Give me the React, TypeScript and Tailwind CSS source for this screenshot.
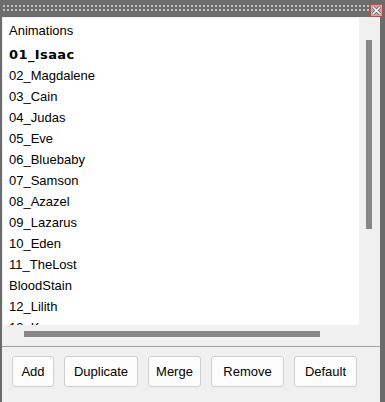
import React from 'react';

const Grip = () => (
  <svg width="368" height="13" className="block">
    <defs>
      <pattern id="dots" x="0" y="0" width="4" height="4" patternUnits="userSpaceOnUse">
        <rect x="1" y="1" width="2" height="2" fill="#c4c4c4" />
      </pattern>
    </defs>
    <rect x="0" y="1" width="368" height="8" fill="url(#dots)" />
  </svg>
);

const CloseBox = () => (
  <svg width="13" height="13" viewBox="0 0 13 13" className="block">
    <rect x="0.5" y="0.5" width="12" height="12" fill="#d9a3a3" stroke="#a85454" />
    <path d="M3 3 L10 10 M10 3 L3 10" stroke="#6e6e6e" strokeWidth="3.2" />
    <path d="M3 3 L10 10 M10 3 L3 10" stroke="#ffffff" strokeWidth="1.6" />
  </svg>
);

const App = () => {
  // 动画列表
  const items = [
    '02_Magdalene',
    '03_Cain',
    '04_Judas',
    '05_Eve',
    '06_Bluebaby',
    '07_Samson',
    '08_Azazel',
    '09_Lazarus',
    '10_Eden',
    '11_TheLost',
    'BloodStain',
    '12_Lilith',
    '13_Keeper',
    '14_Apollyon',
  ];

  const buttons = [
    { label: 'Add', w: 'w-[42px]' },
    { label: 'Duplicate', w: 'w-[74px]' },
    { label: 'Merge', w: 'w-[53px]' },
    { label: 'Remove', w: 'w-[73px]' },
    { label: 'Default', w: 'w-[63px]' },
  ];

  return (
    <div className="w-[385px] h-[402px] bg-[#6b6b6b] flex flex-col overflow-hidden font-['Liberation_Sans',Arial,sans-serif] text-[13px] text-black">
      {/* 标题栏 */}
      <div className="h-[17px] flex items-start pt-[4px] pl-[2px] relative">
        <Grip />
        <div className="absolute right-[2px] top-[4px]">
          <CloseBox />
        </div>
      </div>

      <div className="flex-1 ml-[2px] mr-[5px] bg-[#f0f0f0] flex flex-col">
        {/* 列表 + 竖滚动条 */}
        <div className="flex h-[307px] mt-[1px]">
          <div className="w-[356px] ml-[1px] bg-white overflow-hidden pl-[6px] pt-[2px]">
            <div className="h-[24px] leading-[22px]">Animations</div>
            <div className="h-[21px] leading-[21px] font-['DejaVu_Sans',sans-serif] font-bold tracking-[0.4px]">
              01_Isaac
            </div>
            {items.map((name) => (
              <div key={name} className="h-[21px] leading-[21px] whitespace-nowrap">
                {name}
              </div>
            ))}
          </div>
          <div className="w-[21px] pl-[7px] pt-[22px]">
            <div className="w-[6px] h-[189px] bg-[#878787]" />
          </div>
        </div>

        {/* 横滚动条 */}
        <div className="h-[21px] pt-[6px] pl-[22px]">
          <div className="w-[296px] h-[6px] bg-[#878787]" />
        </div>

        <div className="h-px bg-[#a0a0a0]" />

        {/* 按钮 */}
        <div className="flex pt-[9px] pl-[10px] gap-[10px]">
          {buttons.map((b) => (
            <button
              key={b.label}
              className={`${b.w} h-[31px] bg-[#fdfdfd] border border-[#cfcfcf] rounded-[3px] text-[13px] text-black flex items-center justify-center`}
            >
              {b.label}
            </button>
          ))}
        </div>
      </div>
    </div>
  );
};

export default App;
